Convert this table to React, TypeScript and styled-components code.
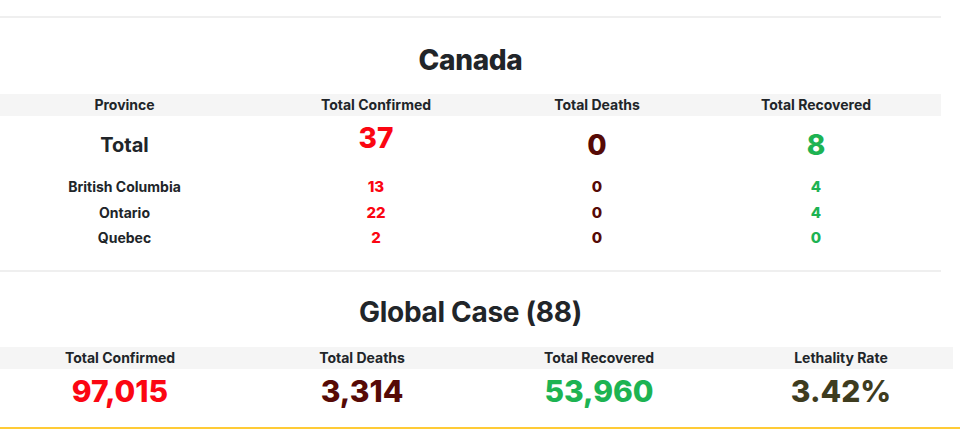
import React from "react";
import styled, { createGlobalStyle } from "styled-components";

const GlobalStyle = createGlobalStyle`
  body {
    margin: 0;
    background: #fff;
    font-family: Inter, "Noto Sans", sans-serif;
    color: #212529;
  }
`;

const Page = styled.div({
  width: 960,
  height: 429,
  overflow: "hidden",
  display: "flex",
  flexDirection: "column",
});

const Main = styled.div({
  width: 941,
  paddingTop: 16,
  display: "flex",
  flexDirection: "column",
});

const Divider = styled.div({
  height: 2,
  backgroundColor: "#efefef",
});

const Spacer = styled.div<{ h: number }>((p) => ({
  height: p.h,
  flexShrink: 0,
}));

const Title = styled.h2<{ weight: number }>((p) => ({
  margin: 0,
  textAlign: "center",
  fontSize: 28,
  fontWeight: p.weight,
  lineHeight: "34px",
  letterSpacing: -0.3,
}));

const Grid = styled.div<{ cols: string; width?: number }>((p) => ({
  display: "grid",
  gridTemplateColumns: p.cols,
  width: p.width ?? "100%",
}));

const HeadRow = styled(Grid)({
  backgroundColor: "#f5f5f5",
  height: 22,
  alignItems: "center",
});

const HeadCell = styled.div<{ shift?: number }>((p) => ({
  textAlign: "center",
  fontSize: 14,
  fontWeight: 700,
  lineHeight: "22px",
  paddingLeft: p.shift ?? 0,
}));

const Row = styled(Grid)<{ h: number }>((p) => ({
  height: p.h,
  alignItems: "center",
}));

const NameCell = styled.div<{ size: number }>((p) => ({
  textAlign: "center",
  fontSize: p.size,
  fontWeight: 700,
}));

const NumCell = styled.div<{
  size: number;
  color: string;
  raise?: number;
  shift?: number;
}>((p) => ({
  textAlign: "center",
  fontSize: p.size,
  fontWeight: 800,
  color: p.color,
  paddingLeft: p.shift ?? 0,
  transform: p.raise ? `translateY(-${p.raise}px)` : undefined,
}));

const YellowLine = styled.div({
  height: 2,
  backgroundColor: "#ffcb36",
  marginTop: "auto",
});

const RED = "#fb0612";
const MAROON = "#560a06";
const GREEN = "#1db352";
const OLIVE = "#3e3c1f";

const CANADA_COLS = "249px 254px 188px 1fr";
const GLOBAL_COLS = "240px 244px 230px 1fr";

const provinces = [
  { name: "British Columbia", confirmed: 13, deaths: 0, recovered: 4 },
  { name: "Ontario", confirmed: 22, deaths: 0, recovered: 4 },
  { name: "Quebec", confirmed: 2, deaths: 0, recovered: 0 },
];

const App: React.FC = () => {
  return (
    <Page>
      <GlobalStyle />
      <Main>
        <Divider />
        <Spacer h={25} />
        <Title weight={800}>Canada</Title>
        <Spacer h={17} />
        <HeadRow cols={CANADA_COLS}>
          <HeadCell>Province</HeadCell>
          <HeadCell>Total Confirmed</HeadCell>
          <HeadCell>Total Deaths</HeadCell>
          <HeadCell>Total Recovered</HeadCell>
        </HeadRow>
        <Row cols={CANADA_COLS} h={58}>
          <NameCell size={20}>Total</NameCell>
          <NumCell size={28} color={RED} raise={7}>
            37
          </NumCell>
          <NumCell size={28} color={MAROON}>
            0
          </NumCell>
          <NumCell size={28} color={GREEN}>
            8
          </NumCell>
        </Row>
        {provinces.map((p) => (
          <Row key={p.name} cols={CANADA_COLS} h={25.5}>
            <NameCell size={14}>{p.name}</NameCell>
            <NumCell size={15} color={RED}>
              {p.confirmed}
            </NumCell>
            <NumCell size={15} color={MAROON}>
              {p.deaths}
            </NumCell>
            <NumCell size={15} color={GREEN}>
              {p.recovered}
            </NumCell>
          </Row>
        ))}
        <Spacer h={19} />
        <Divider />
        <Spacer h={23} />
        <Title weight={700}>Global Case (88)</Title>
        <Spacer h={18} />
        <HeadRow cols={GLOBAL_COLS} width={953}>
          <HeadCell>Total Confirmed</HeadCell>
          <HeadCell>Total Deaths</HeadCell>
          <HeadCell>Total Recovered</HeadCell>
          <HeadCell shift={15}>Lethality Rate</HeadCell>
        </HeadRow>
        <Row cols={GLOBAL_COLS} h={44} width={953}>
          <NumCell size={30} color={RED}>
            97,015
          </NumCell>
          <NumCell size={30} color={MAROON}>
            3,314
          </NumCell>
          <NumCell size={30} color={GREEN}>
            53,960
          </NumCell>
          <NumCell size={30} color={OLIVE} shift={15}>
            3.42%
          </NumCell>
        </Row>
      </Main>
      <YellowLine />
    </Page>
  );
};

export default App;
